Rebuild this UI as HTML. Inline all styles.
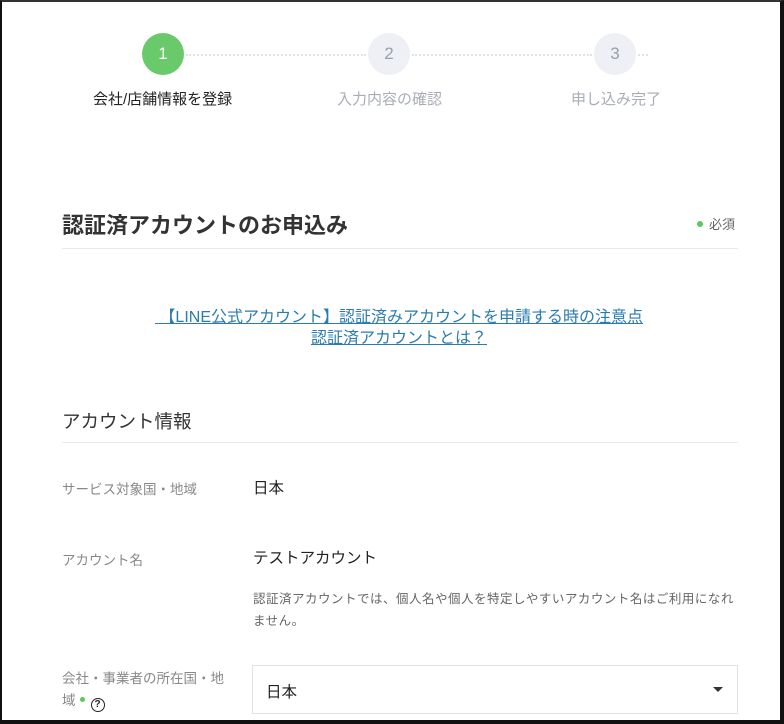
<!DOCTYPE html>
<html><head><meta charset="utf-8"><style>
*{margin:0;padding:0;box-sizing:border-box}
html,body{width:784px;height:724px;overflow:hidden;background:#fff}
body{font-family:"Liberation Sans","Noto Sans CJK JP",sans-serif;position:relative;color:#222}
.frame{position:absolute;left:0;top:0;width:784px;height:724px;border-left:2px solid #111;border-top:2px solid #333;border-right:4px solid #111;border-bottom:4px solid #111}
.abs{position:absolute}
.circ{position:absolute;width:42px;height:42px;border-radius:50%;text-align:center;line-height:42px;font-size:17px}
.dots{position:absolute;top:54px;border-top:2px dotted #dfe2e8;height:0}
.lbl{position:absolute;top:88px;font-size:15px;white-space:nowrap}
.hr{position:absolute;left:62px;width:676px;height:1px;background:#e8e8e8}
.lab{position:absolute;left:62px;font-size:13.5px;color:#888}
</style></head><body>
<div class="dots" style="left:186px;width:180px"></div>
<div class="dots" style="left:412px;width:180px"></div>
<div class="dots" style="left:638px;width:10px"></div>
<div class="circ" style="left:142px;top:33px;background:#6ac96b;color:#fff">1</div>
<div class="circ" style="left:368px;top:33px;background:#eef0f5;color:#9aa0a8">2</div>
<div class="circ" style="left:594px;top:33px;background:#eef0f5;color:#9aa0a8">3</div>
<div class="lbl" style="left:93px;color:#222">会社/店舗情報を登録</div>
<div class="lbl" style="left:337px;color:#a8adb5">入力内容の確認</div>
<div class="lbl" style="left:571px;color:#a8adb5">申し込み完了</div>

<div class="abs" style="left:62px;top:208px;font-size:22px;font-weight:bold;color:#333">認証済アカウントのお申込み</div>
<div class="abs" style="left:697px;top:214px;font-size:13px;color:#666"><span style="display:inline-block;width:6px;height:6px;border-radius:50%;background:#5cc75e;margin-right:6px;vertical-align:2px"></span>必須</div>
<div class="hr" style="top:248px"></div>

<div class="abs" style="left:0;width:798px;top:307px;text-align:center;font-size:16px;line-height:21px;color:#2a7bb0;text-decoration:underline">&nbsp;【LINE公式アカウント】認証済みアカウントを申請する時の注意点<br>認証済アカウントとは？</div>

<div class="abs" style="left:62px;top:408px;font-size:18.5px;color:#333">アカウント情報</div>
<div class="hr" style="top:442px"></div>

<div class="lab" style="top:478px">サービス対象国・地域</div>
<div class="abs" style="left:253px;top:476px;font-size:15.5px">日本</div>
<div class="lab" style="top:549px">アカウント名</div>
<div class="abs" style="left:253px;top:546px;font-size:15.5px">テストアカウント</div>
<div class="abs" style="left:253px;top:588px;width:500px;font-size:12.5px;letter-spacing:0.5px;line-height:22px;color:#666;white-space:nowrap">認証済アカウントでは、個人名や個人を特定しやすいアカウント名はご利用になれ<br>ません。</div>

<div class="lab" style="top:668px;line-height:22px;width:172px">会社・事業者の所在国・地域<span style="display:inline-block;width:5px;height:5px;border-radius:50%;background:#5cc75e;margin:0 6px 0 4px;vertical-align:3px"></span><span style="display:inline-block;width:14px;height:14px;border:1.5px solid #222;border-radius:50%;font-size:10px;line-height:11px;text-align:center;color:#222;font-weight:bold;vertical-align:-2px">?</span></div>
<div class="abs" style="left:252px;top:665px;width:486px;height:49px;border:1px solid #dfe2e6;font-size:15.5px;padding:14px 0 0 13px">日本<span style="position:absolute;right:14px;top:21px;width:0;height:0;border-left:5px solid transparent;border-right:5px solid transparent;border-top:5px solid #333"></span></div>
<div class="frame"></div>
</body></html>
